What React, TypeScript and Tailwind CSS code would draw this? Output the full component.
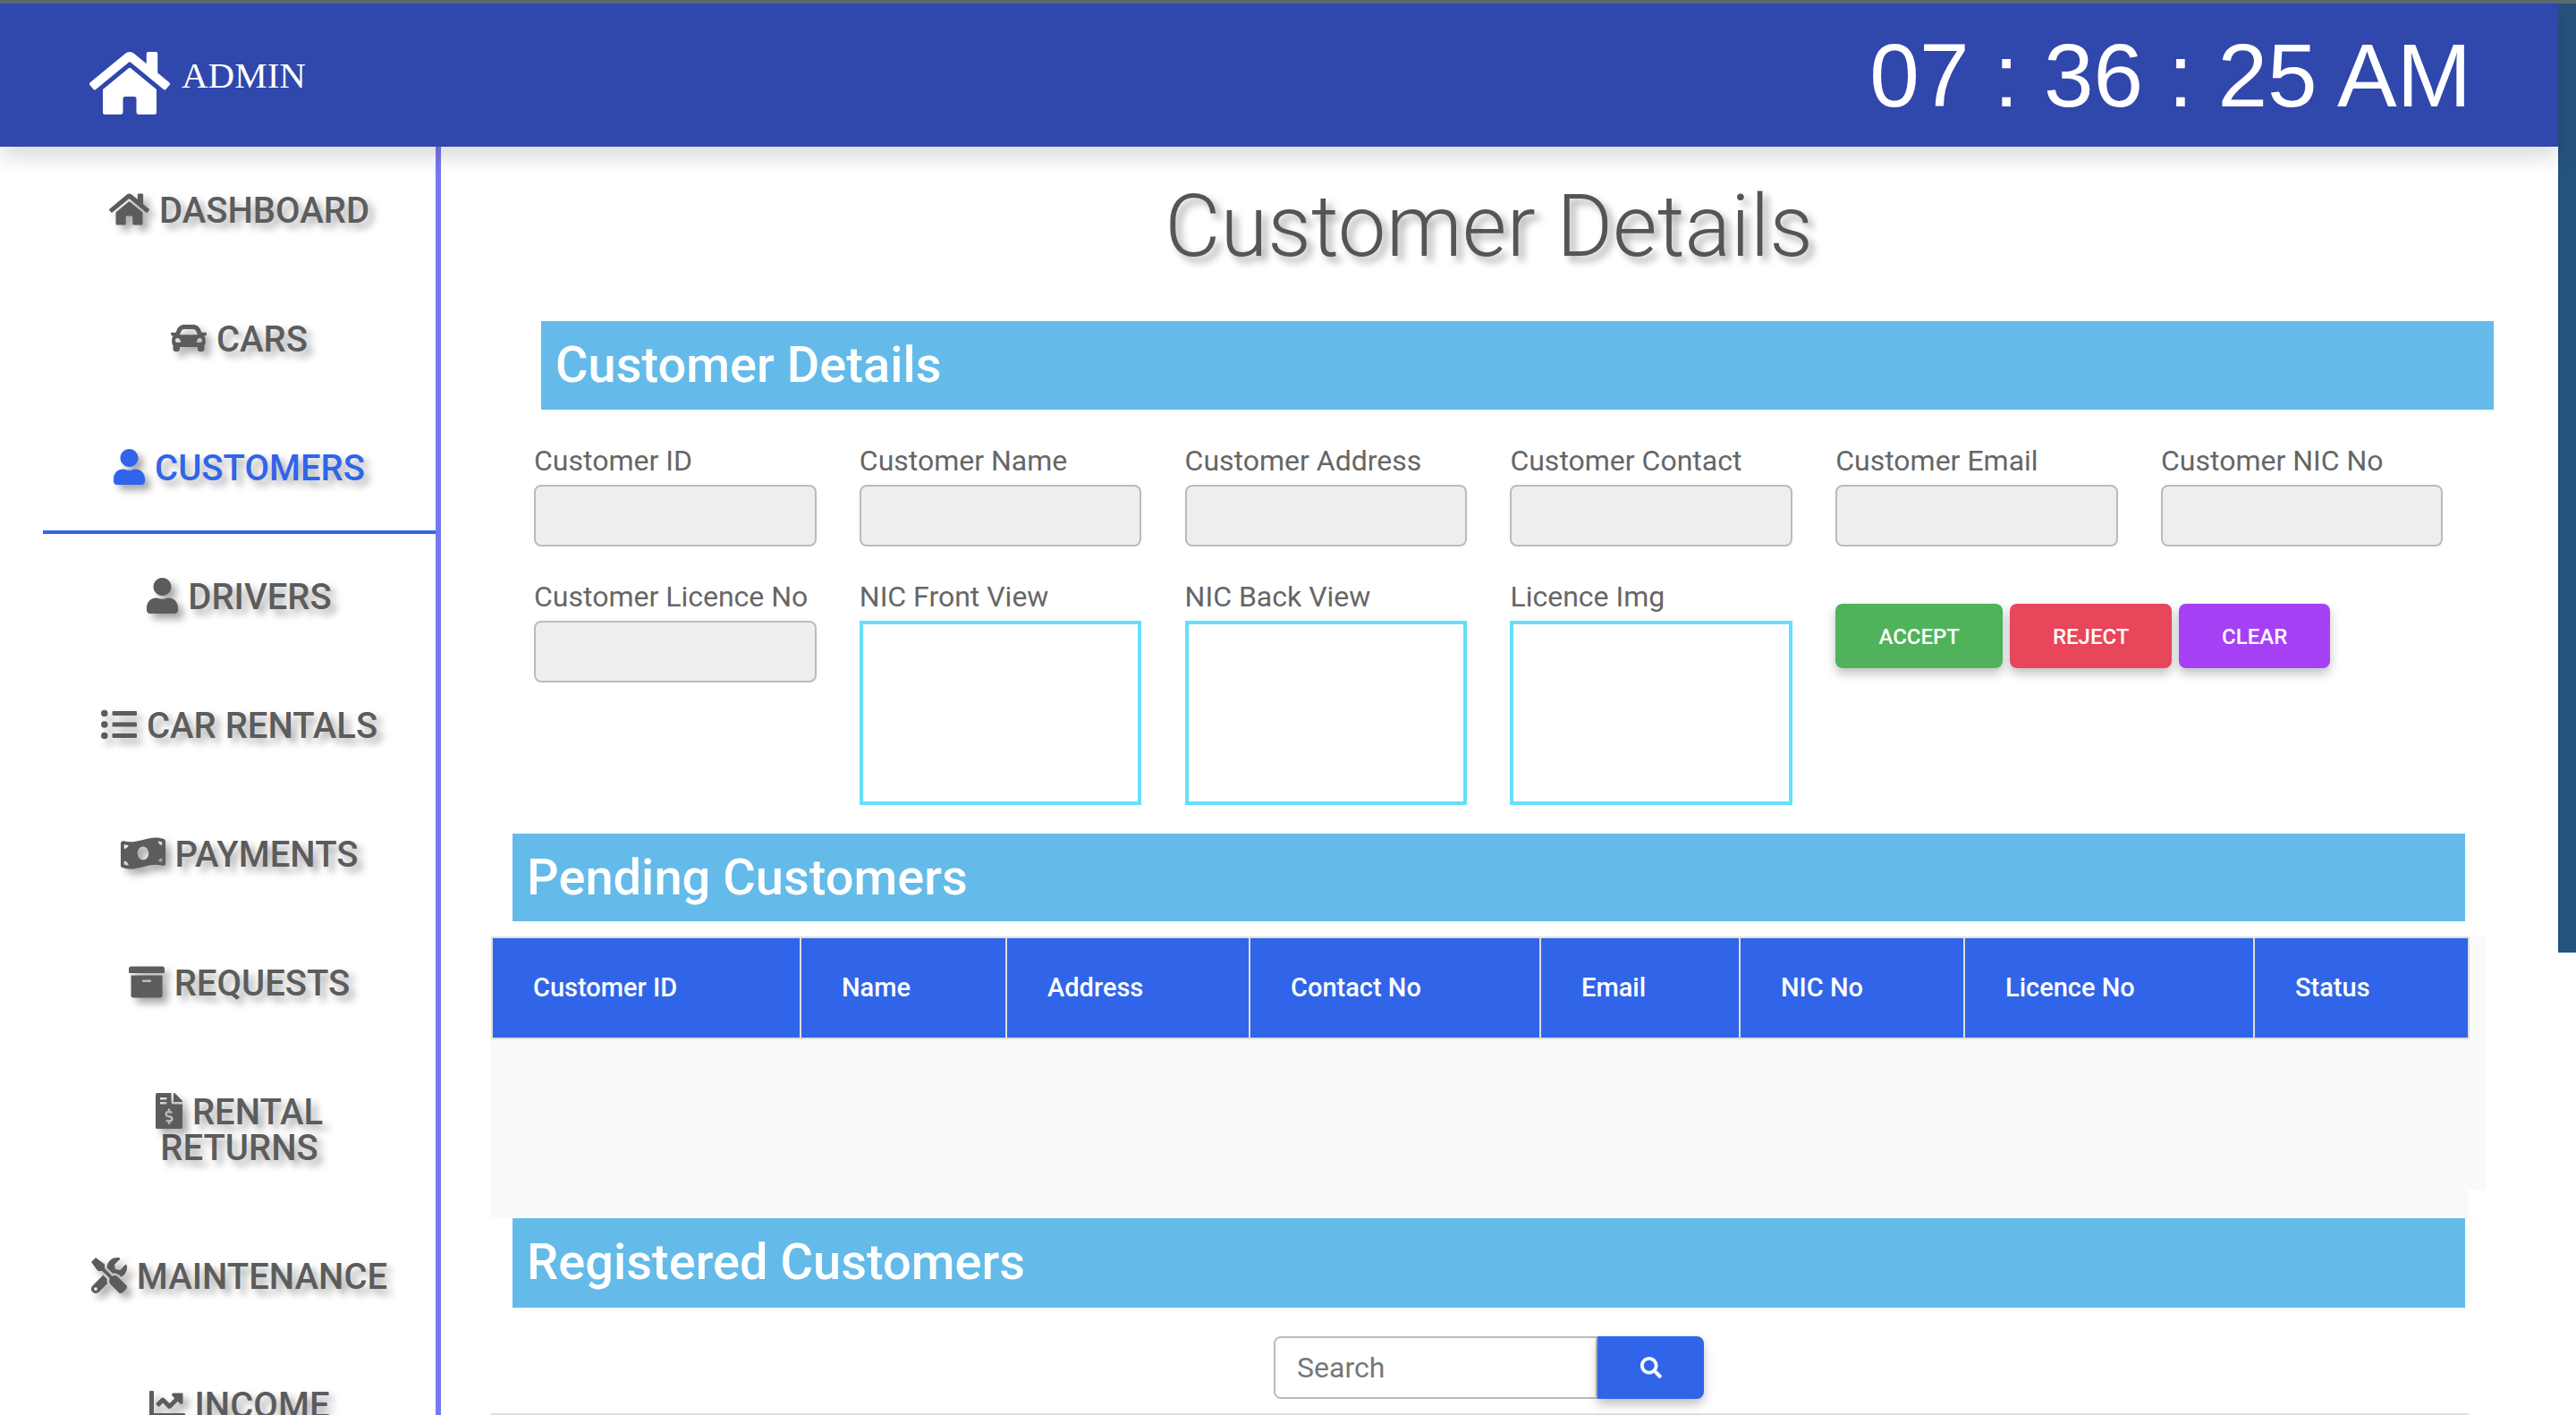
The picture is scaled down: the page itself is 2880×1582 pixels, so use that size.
import type { ReactNode } from "react";
import {
  FaArchive,
  FaCar,
  FaChartLine,
  FaFileInvoiceDollar,
  FaHome,
  FaListUl,
  FaMoneyBillWave,
  FaSearch,
  FaTools,
  FaUser,
} from "react-icons/fa";

const NAV_ITEMS: { label: ReactNode; icon: ReactNode; active?: boolean; tall?: boolean }[] = [
  { label: "DASHBOARD", icon: <FaHome className="w-[45px] h-[40px]" /> },
  { label: "CARS", icon: <FaCar className="w-[40px] h-[40px]" /> },
  { label: "CUSTOMERS", icon: <FaUser className="w-[35px] h-[40px]" />, active: true },
  { label: "DRIVERS", icon: <FaUser className="w-[35px] h-[40px]" /> },
  { label: "CAR RENTALS", icon: <FaListUl className="w-[40px] h-[40px]" /> },
  { label: "PAYMENTS", icon: <FaMoneyBillWave className="w-[50px] h-[40px]" /> },
  { label: "REQUESTS", icon: <FaArchive className="w-[40px] h-[40px]" /> },
  {
    label: (
      <>
        RENTAL
        <br />
        RETURNS
      </>
    ),
    icon: <FaFileInvoiceDollar className="w-[30px] h-[40px]" />,
    tall: true,
  },
  { label: "MAINTENANCE", icon: <FaTools className="w-[40px] h-[40px]" /> },
  { label: "INCOME", icon: <FaChartLine className="w-[40px] h-[40px]" /> },
];

const TOP_FIELDS = [
  "Customer ID",
  "Customer Name",
  "Customer Address",
  "Customer Contact",
  "Customer Email",
  "Customer NIC No",
];

const IMAGE_FIELDS = ["NIC Front View", "NIC Back View", "Licence Img"];

const COLUMNS = [
  { label: "Customer ID", width: "w-[345px]" },
  { label: "Name", width: "w-[230px]" },
  { label: "Address", width: "w-[272px]" },
  { label: "Contact No", width: "w-[325px]" },
  { label: "Email", width: "w-[223px]" },
  { label: "NIC No", width: "w-[251px]" },
  { label: "Licence No", width: "w-[324px]" },
  { label: "Status", width: "w-[240px]" },
];

function Field({ label }: { label: string }) {
  return (
    <div>
      <div className="h-[40px] mb-[7px] leading-[40px] text-[32px] text-[#666]">{label}</div>
      <input
        disabled
        aria-label={label}
        className="block w-full h-[69px] bg-[#eee] border-2 border-[#bbb] rounded-[8px]"
      />
    </div>
  );
}

function ImageField({ label }: { label: string }) {
  return (
    <div>
      <div className="h-[40px] mb-[7px] leading-[40px] text-[32px] text-[#666]">{label}</div>
      <div className="h-[206px] bg-white border-[4px] border-[#66dffa]" />
    </div>
  );
}

function SectionBar({ title, className }: { title: string; className: string }) {
  return (
    <div
      className={`w-[2183px] flex items-center bg-[#64bbe9] text-[56px] font-medium text-white ${className}`}
    >
      {title}
    </div>
  );
}

function ActionButton({ label, className }: { label: string; className: string }) {
  return (
    <button
      className={`h-[72px] pt-[2px] rounded-[8px] text-[24px] font-medium text-white shadow-[0_6px_12px_rgba(0,0,0,0.25)] ${className}`}
    >
      {label}
    </button>
  );
}

export default function App() {
  return (
    <div className="h-[1582px] w-[2880px] overflow-hidden bg-white font-['Roboto',sans-serif]">
      <div className="h-[4px] bg-[#5b6b70]" />
      <div className="flex items-start">
        <div className="w-[2860px]">
          {/* Header */}
          <header className="relative z-10 h-[160px] flex items-center justify-between pl-[100px] pr-[97px] bg-[#3047ab] text-white shadow-[0_10px_24px_rgba(0,0,0,0.16)]">
            <div className="flex items-center gap-[13px]">
              <FaHome className="w-[90px] h-[80px] translate-y-[9px]" />
              <span className="font-['Liberation_Serif',serif] text-[41px] leading-none">ADMIN</span>
            </div>
            <div className="font-['Liberation_Sans',sans-serif] text-[100px] leading-none">
              07 : 36 : 25 AM
            </div>
          </header>

          <div className="flex items-start">
            {/* Sidebar */}
            <nav className="w-[493px] shrink-0 h-[1418px] border-r-[6px] border-[#7579f0] pl-[48px]">
              {NAV_ITEMS.map((item, i) => (
                <div
                  key={i}
                  className={`flex items-center justify-center text-center text-[40px] leading-[40px] font-medium [text-shadow:6px_6px_8px_rgba(0,0,0,0.35)] ${
                    item.tall ? "h-[184px]" : item.active ? "h-[145px] -mb-px" : "h-[144px]"
                  } ${item.active ? "text-[#3065e9] border-b-4 border-[#3065e9]" : "text-[#5c5c5c] pb-[2px]"}`}
                >
                  <div>
                    <span className="inline-block align-[-0.125em] mr-[11px] drop-shadow-[6px_6px_4px_rgba(0,0,0,0.35)]">
                      {item.icon}
                    </span>
                    {item.label}
                  </div>
                </div>
              ))}
            </nav>

            {/* Main */}
            <main className="flex-1 pl-[56px]">
              <h1 className="w-[2231px] h-[195px] pb-[18px] flex items-center justify-center text-[96px] font-light text-[#555] [text-shadow:6px_6px_8px_rgba(0,0,0,0.35)]">
                Customer Details
              </h1>

              <SectionBar title="Customer Details" className="ml-[56px] h-[99px] pl-[16px] pb-[2px]" />

              <div className="ml-[48px] pt-[37px] grid grid-cols-[repeat(6,315.5px)] gap-x-[48.3px] gap-y-[36px]">
                {TOP_FIELDS.map((label) => (
                  <Field key={label} label={label} />
                ))}
                <Field label="Customer Licence No" />
                {IMAGE_FIELDS.map((label) => (
                  <ImageField key={label} label={label} />
                ))}
                <div className="col-span-2 pt-[28px] flex items-start gap-[8px]">
                  <ActionButton label="ACCEPT" className="w-[187px] bg-[#50b35c]" />
                  <ActionButton label="REJECT" className="w-[181px] bg-[#e8465a]" />
                  <ActionButton label="CLEAR" className="w-[169px] bg-[#a640f5]" />
                </div>
              </div>

              <SectionBar title="Pending Customers" className="ml-[24px] mt-[32px] h-[98px] pl-[16px]" />

              {/* Pending table */}
              <div className="mt-[17px] w-[2231px] h-[283px] bg-[#fafafa]">
                <table className="w-[2210px] table-fixed border-collapse border-2 border-[#ddd]">
                  <thead>
                    <tr className="h-[113px] bg-[#3065e9]">
                      {COLUMNS.map((col) => (
                        <th
                          key={col.label}
                          className={`${col.width} pl-[45px] text-left text-[29px] font-medium text-white border-2 border-[#ddd]`}
                        >
                          {col.label}
                        </th>
                      ))}
                    </tr>
                  </thead>
                </table>
              </div>
              <div className="w-[2211px] h-[32px] bg-[#fafafa]" />

              <SectionBar title="Registered Customers" className="ml-[24px] h-[100px] pl-[16px] pb-[2px]" />

              <div className="w-[2211px] pt-[32px] pb-[16px] pl-[875px] flex border-b-2 border-[#ddd]">
                <input
                  placeholder="Search"
                  className="w-[362px] h-[70px] pl-[24px] bg-white border-2 border-[#bbb] rounded-l-[8px] text-[32px] text-[#555] placeholder:text-[#777] outline-none"
                />
                <button
                  aria-label="Search"
                  className="w-[119px] h-[70px] flex items-center justify-center bg-[#3065e9] rounded-r-[8px] text-white text-[24px] shadow-[0_6px_12px_rgba(0,0,0,0.25)]"
                >
                  <FaSearch />
                </button>
              </div>
            </main>
          </div>
        </div>
        <div className="w-[20px] h-[1061px] bg-[#26527f]" />
      </div>
    </div>
  );
}
